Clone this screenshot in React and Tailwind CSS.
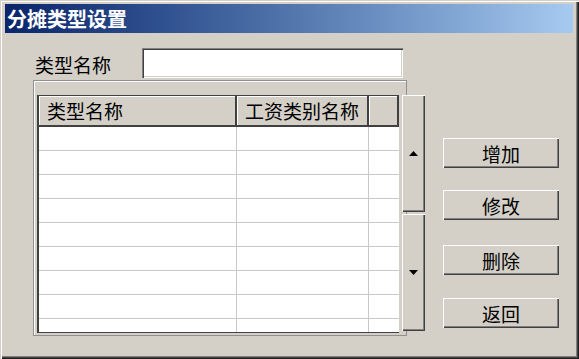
const FONT = { fontFamily: '"Noto Sans CJK SC", "Noto Sans", sans-serif' };

const RAISED = 'shadow-[inset_1px_1px_#ffffff,inset_-1px_-1px_#404040,inset_-2px_-2px_#808080]';

const ROWS = Array.from({ length: 9 });

function PushButton({ label, className }) {
  return (
    <div
      className={`flex h-[30px] w-[116px] items-center justify-center bg-[#d4d0c8] text-[19px] leading-none text-black ${RAISED} ${className}`}
    >
      {label}
    </div>
  );
}

function ScrollButton({ dir }) {
  return (
    <div className={`flex h-[117px] w-[23px] items-center justify-center bg-[#d4d0c8] ${RAISED}`}>
      <svg width="9" height="5" viewBox="0 0 9 5">
        {dir === 'up'
          ? <polygon points="4.5,0 9,5 0,5" fill="#000" />
          : <polygon points="0,0 9,0 4.5,5" fill="#000" />}
      </svg>
    </div>
  );
}

function HeaderCell({ width, label }) {
  return (
    <div
      className={`${width} flex h-full shrink-0 items-center border-r-2 border-[#404040] bg-[#d4d0c8] pl-[8px] text-[19px] leading-none text-black shadow-[inset_1px_1px_#ffffff]`}
    >
      {label}
    </div>
  );
}

export default function App() {
  return (
    <div
      className="h-[359px] w-[579px] overflow-hidden bg-[#d4d0c8] pt-[4px] shadow-[inset_1px_1px_#d4d0c8,inset_2px_2px_#ffffff,inset_-1px_-1px_#202020,inset_-2px_-2px_#404040,inset_-3px_-3px_#808080]"
      style={FONT}
    >
      {/* title bar */}
      <div className="ml-[5px] flex h-[29px] w-[568px] items-center bg-gradient-to-r from-[#0a246a] to-[#a6caf0] pl-[2px] text-[20px] font-bold leading-none text-white">
        分摊类型设置
      </div>

      <div className="flex pl-[33px]">
        {/* left column */}
        <div className="w-[374px] shrink-0">
          <div className="mt-[15px] flex h-[30px] items-center">
            <span className="w-[109px] shrink-0 pl-[2px] pt-[3px] text-[19px] leading-none text-black">类型名称</span>
            <div className="h-[30px] w-[261px] shrink-0 bg-white shadow-[inset_1px_1px_#808080,inset_2px_2px_#404040,inset_-1px_-1px_#ffffff,inset_-2px_-2px_#d4d0c8]" />
          </div>

          {/* grid frame */}
          <div className="mt-[2px] flex h-[256px] w-[374px] items-start border border-[#909090] pl-[3px] pt-[14px] shadow-[inset_1px_1px_#ffffff]">
            <div className="h-[238px] w-[362px] shrink-0 overflow-hidden border-b border-l-2 border-[#404040] bg-white">
              <div className="flex h-[32px] border-b-2 border-t border-[#404040]">
                <HeaderCell width="w-[198px]" label="类型名称" />
                <HeaderCell width="w-[132px]" label="工资类别名称" />
                <HeaderCell width="w-[30px]" label="" />
              </div>
              {ROWS.map((_, i) => (
                <div key={i} className="flex h-[24px] border-b border-[#c8c8c8]">
                  <div className="w-[198px] shrink-0 border-r border-[#c8c8c8]" />
                  <div className="w-[132px] shrink-0 border-r border-[#c8c8c8]" />
                  <div className="w-[30px] shrink-0" />
                </div>
              ))}
            </div>
            <div className="ml-[3px] flex shrink-0 flex-col gap-[2px]">
              <ScrollButton dir="up" />
              <ScrollButton dir="down" />
            </div>
          </div>
        </div>

        {/* right buttons */}
        <div className="ml-[36px] flex shrink-0 flex-col pt-[105px]">
          <PushButton label="增加" />
          <PushButton label="修改" className="mt-[22px]" />
          <PushButton label="删除" className="mt-[25px]" />
          <PushButton label="返回" className="mt-[23px]" />
        </div>
      </div>
    </div>
  );
}
